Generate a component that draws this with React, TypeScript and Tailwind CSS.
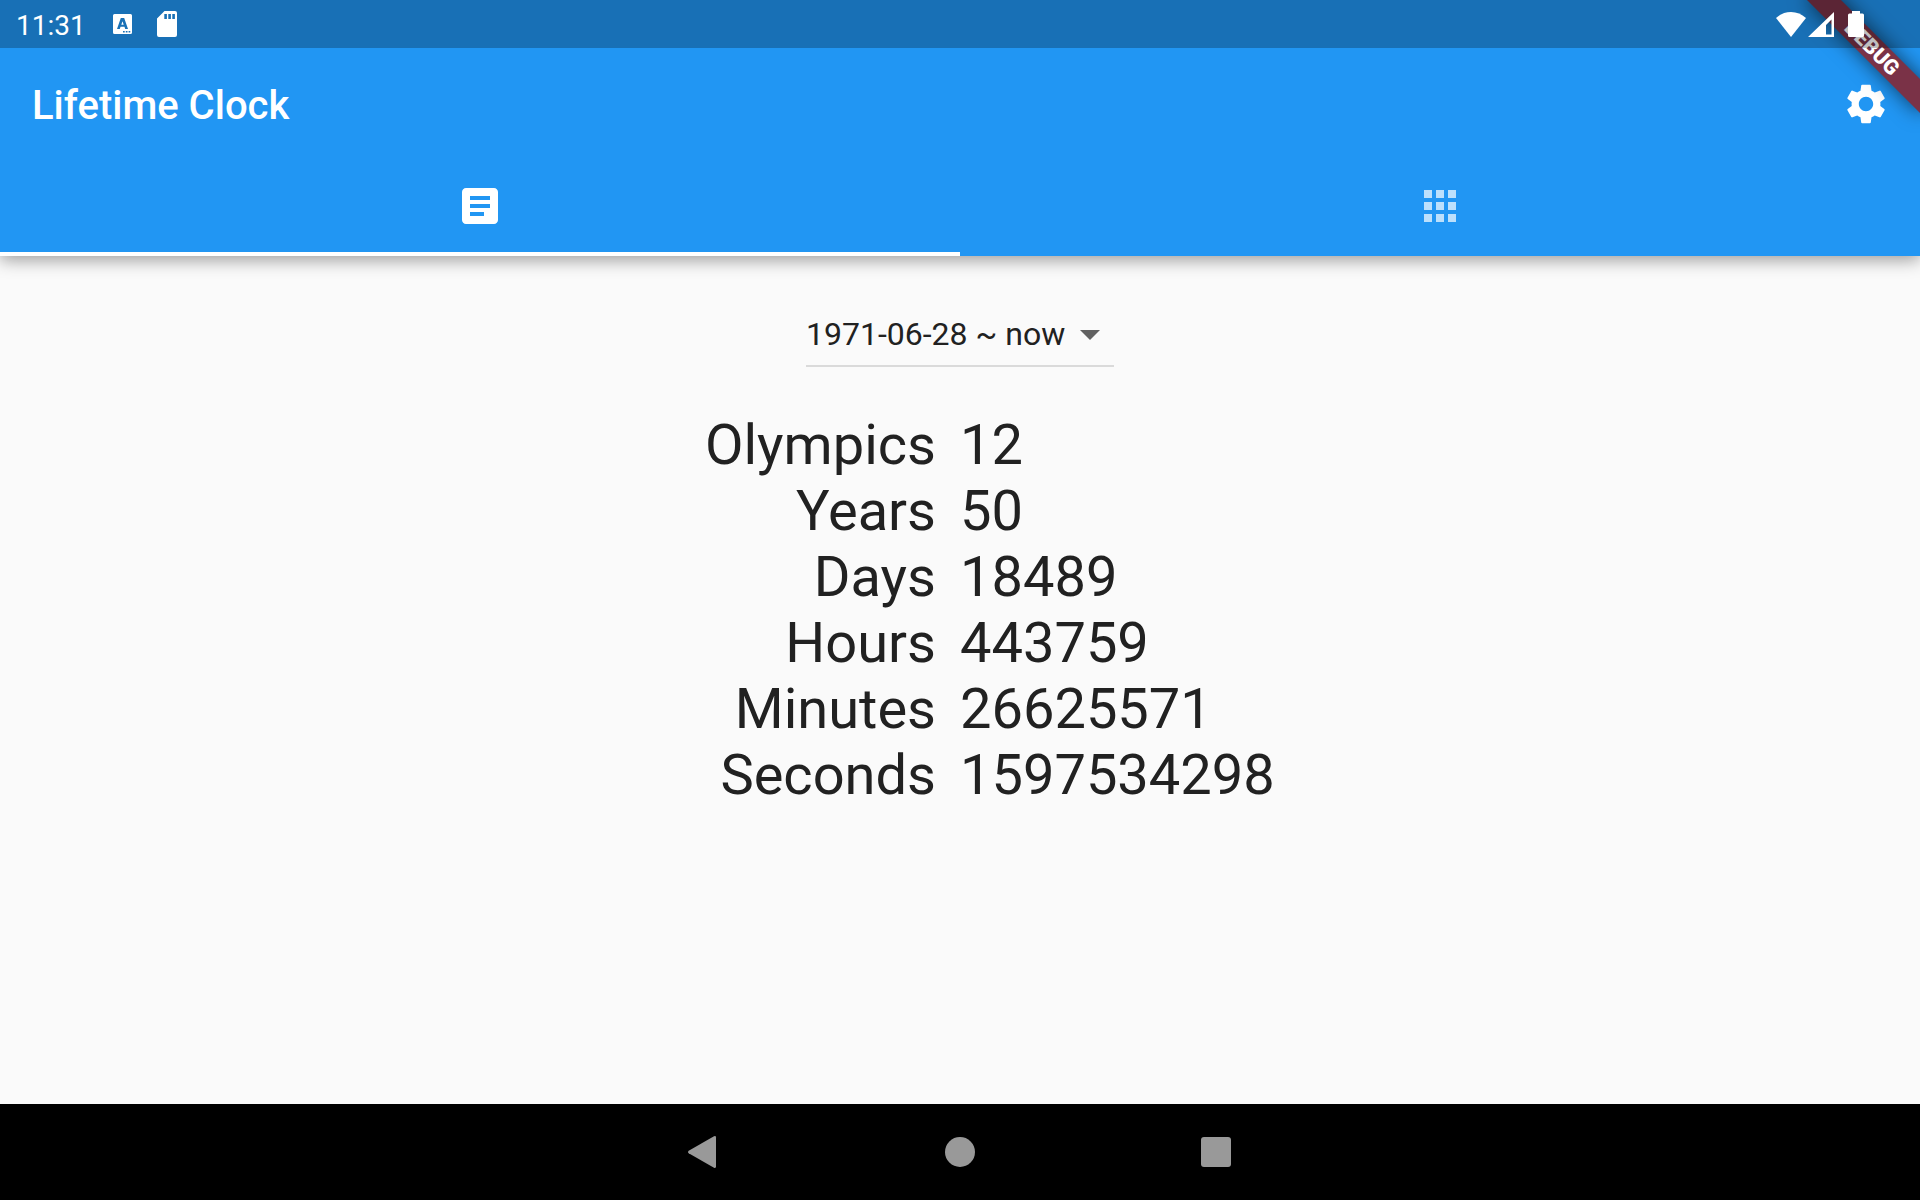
import { useState } from "react";
import { MdApps, MdArrowDropDown, MdArticle, MdSettings } from "react-icons/md";

const rows = [
  ["Olympics", "12"],
  ["Years", "50"],
  ["Days", "18489"],
  ["Hours", "443759"],
  ["Minutes", "26625571"],
  ["Seconds", "1597534298"],
];

function StatusBar() {
  return (
    <div className="relative z-20 flex h-12 items-center bg-black/25 pr-14 pl-4 text-white">
      <span className="pt-1 text-[28px] leading-8">11:31</span>
      <svg viewBox="0 0 20 20" className="ml-[27px] size-5" fill="currentColor" aria-hidden="true">
        <path
          fillRule="evenodd"
          d="M1.5 0h16A1.5 1.5 0 0 1 19 1.500V18.500a1.500 1.500 0 0 1-1.500 1.500h-16A1.500 1.500 0 0 1 0 18.500V1.500A1.500 1.500 0 0 1 1.500 0zM7.800 4 4 15h2.800l.7-2.200h4l.7 2.200H15L11.200 4zm1.700 3.200L10.700 10.700H8.300zM10 17v1.600h1.700V17zm2.800 0v1.600h1.700V17zm2.800 0v1.600h1.700V17z"
        />
      </svg>
      <svg viewBox="0 0 20 26" className="ml-6 h-[26px] w-5" fill="currentColor" aria-hidden="true">
        <path
          fillRule="evenodd"
          d="M7.500 0H18a2 2 0 0 1 2 2v22a2 2 0 0 1-2 2H2a2 2 0 0 1-2-2V7.500zM7.300 3v5h2.600V3zm4 0v5h2.600V3zm4 0v5h2.600V3z"
        />
      </svg>
      <div className="ml-auto flex items-center">
        <svg viewBox="0 0 30 25" className="h-[25px] w-[30px]" fill="currentColor" aria-hidden="true">
          <path d="M15 25 0 6Q6.500 0 15 0T30 6z" />
        </svg>
        <svg viewBox="0 0 26 25" className="ml-[2px] h-[25px] w-[26px]" fill="currentColor" aria-hidden="true">
          <path fillRule="evenodd" d="M26 0v25H0zM23.500 7.500 18 13v9.500h5.500z" />
        </svg>
        <svg viewBox="0 0 16 26" className="ml-3.5 h-[26px] w-4" fill="currentColor" aria-hidden="true">
          <path d="M4 0h8v2.500h2.500A1.500 1.500 0 0 1 16 4v20.500a1.500 1.500 0 0 1-1.500 1.500h-13A1.500 1.500 0 0 1 0 24.500V4a1.500 1.500 0 0 1 1.500-1.500H4z" />
        </svg>
      </div>
    </div>
  );
}

function DebugBanner() {
  return (
    <div className="pointer-events-none absolute top-9 -right-8 z-10 flex h-6 w-40 rotate-45 items-center justify-center bg-[#7a3247] text-[21px] leading-6 font-black text-white shadow-[0_0_20px_rgba(0,0,0,0.6)]">
      DEBUG
    </div>
  );
}

export default function App() {
  const [tab, setTab] = useState(0);
  return (
    <div className="relative flex min-h-screen flex-col overflow-hidden bg-[#fafafa] font-['Roboto',sans-serif] text-[#212121]">
      <header className="bg-[#2196f3] text-white shadow-[0_4px_16px_rgba(0,0,0,0.38)]">
        <StatusBar />
        <div className="flex h-28 items-center justify-between pr-[30px] pl-8">
          <h1 className="pt-1 text-[40px] leading-12 font-medium">Lifetime Clock</h1>
          <button type="button" aria-label="Settings">
            <MdSettings className="size-12" />
          </button>
        </div>
        <div role="tablist" className="grid h-24 grid-cols-2">
          {[MdArticle, MdApps].map((Icon, i) => (
            <button
              key={i}
              type="button"
              role="tab"
              aria-selected={tab === i}
              aria-label={i === 0 ? "List" : "Grid"}
              onClick={() => setTab(i)}
              className={
                tab === i
                  ? "flex items-center justify-center border-b-4 border-white"
                  : "flex items-center justify-center border-b-4 border-transparent text-white/70"
              }
            >
              <Icon className="size-12" />
            </button>
          ))}
        </div>
      </header>
      <DebugBanner />

      <main className="flex flex-1 flex-col items-center pt-[54px]">
        <div className="relative border-b-2 border-[#dadada] pb-[7px]">
          <select
            aria-label="Period"
            className="block h-12 appearance-none bg-transparent pr-12 text-[32px] leading-12"
          >
            <option>1971-06-28 ~ now</option>
          </select>
          <MdArrowDropDown className="pointer-events-none absolute top-0 right-0 size-12 text-[#616161]" />
        </div>
        <table className="mt-[45px] w-full table-fixed text-[56px] leading-[66px]">
          <tbody>
            {rows.map(([label, value]) => (
              <tr key={label}>
                <th scope="row" className="p-0 pr-6 text-right font-normal">
                  {label}
                </th>
                <td className="p-0">{value}</td>
              </tr>
            ))}
          </tbody>
        </table>
      </main>

      <nav className="flex h-24 items-center justify-center bg-black text-[#999]">
        <button type="button" aria-label="Back" className="flex h-full w-64 items-center justify-center">
          <svg viewBox="0 0 32 32" className="size-8" fill="currentColor">
            <path d="M.7 14.700 26 .3Q28 -.5 28 1.500v29Q28 32.500 26 31.700L.7 17.300Q-.7 16 .7 14.700z" />
          </svg>
        </button>
        <button type="button" aria-label="Home" className="flex h-full w-64 items-center justify-center">
          <span className="size-[30px] rounded-full bg-current" />
        </button>
        <button type="button" aria-label="Overview" className="flex h-full w-64 items-center justify-center">
          <span className="size-[30px] rounded-[3px] bg-current" />
        </button>
      </nav>
    </div>
  );
}
